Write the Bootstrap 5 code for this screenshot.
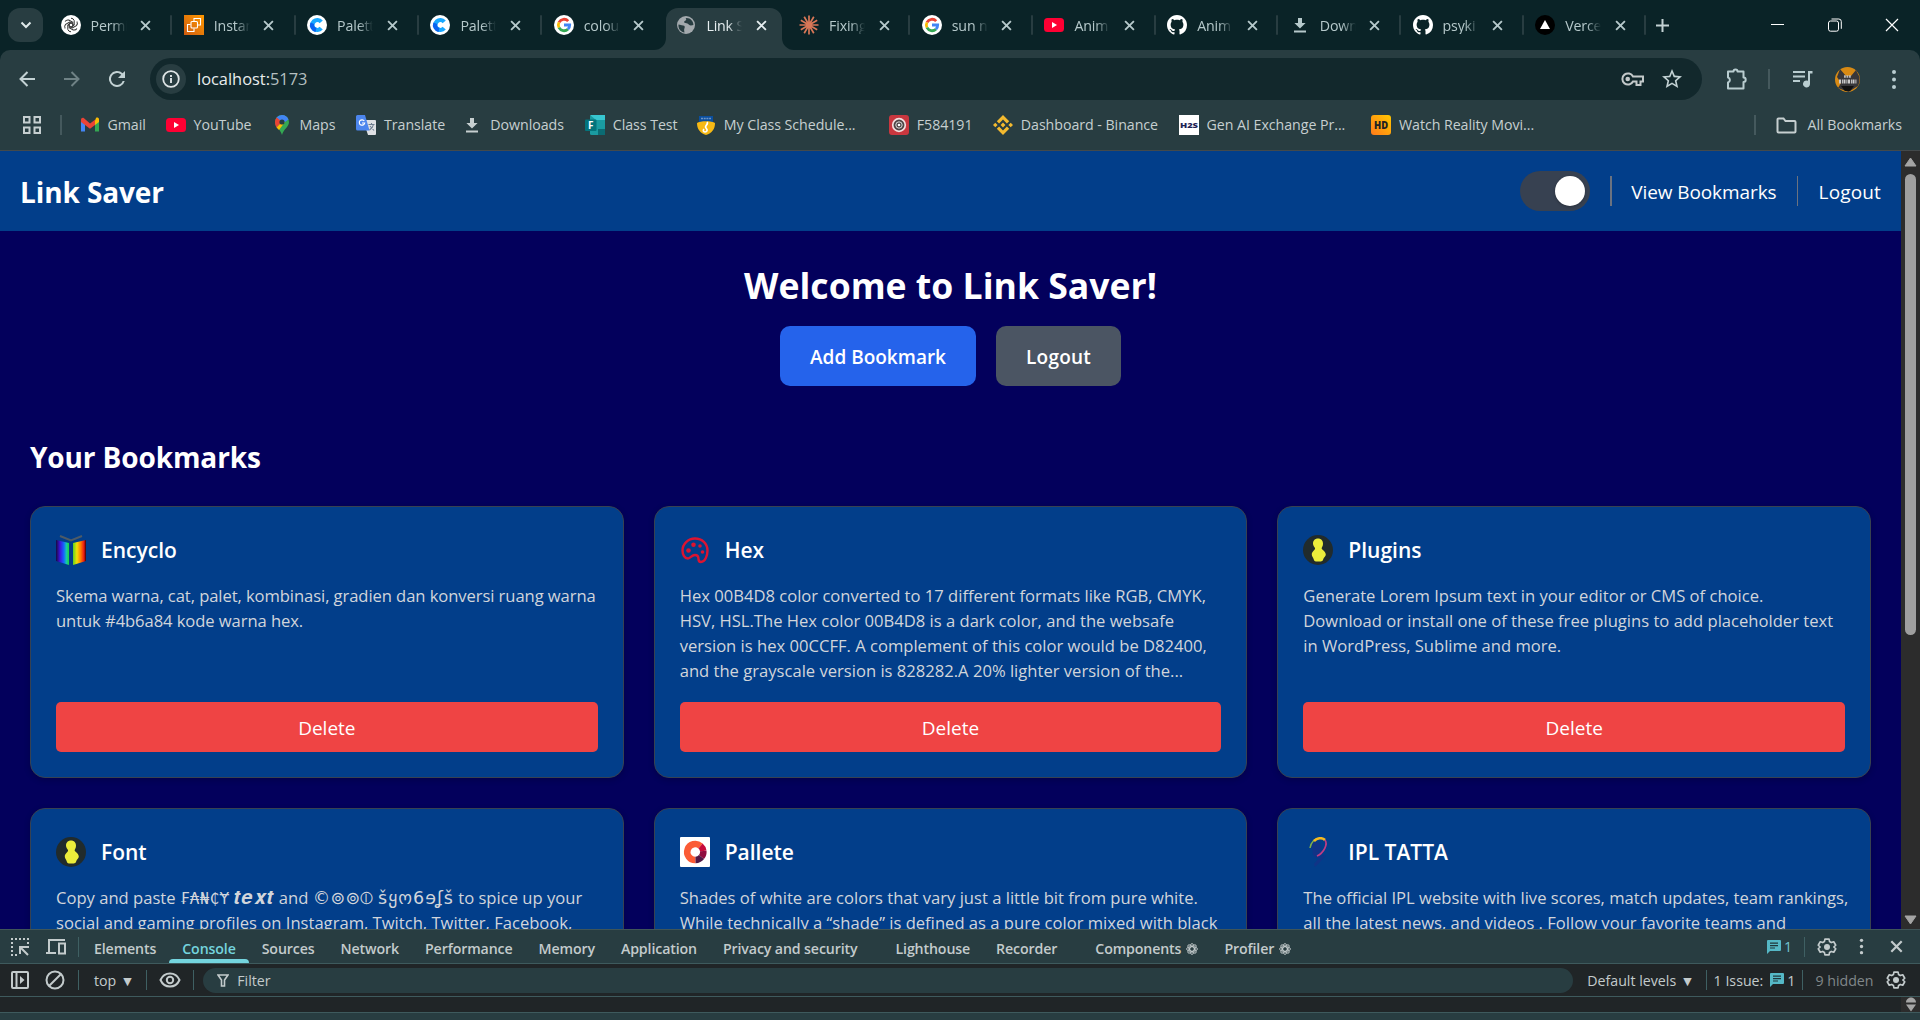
<!DOCTYPE html>
<html lang="en">
<head>
<meta charset="utf-8">
<title>Link Saver</title>
<link href="https://cdn.jsdelivr.net/npm/bootstrap@5.3.0/dist/css/bootstrap.min.css" rel="stylesheet">
<style>
:root{--tabstrip:#0a2327;--toolbar:#283d41;--omni:#12282c;--nav:#023e8a;--page:#03005c}
html,body{height:100%}
body{width:1920px;height:1020px;overflow:hidden;background:var(--page);font-family:"Open Sans","Noto Sans","DejaVu Sans",sans-serif;color:#fff;line-height:1.25}
svg{display:block;flex:none}
.nw{white-space:nowrap}
/* browser tabs */
.strip{height:50px;background:var(--tabstrip);padding-left:8px}
.tab-search{width:35px;height:34px;border-radius:12px;background:var(--toolbar);margin-right:6px}
.btab{width:122.7px;flex:none;height:50px;padding-left:11.5px;position:relative;font-size:14.2px;color:#b6c9cb}
.btab.wide{width:123.3px}
.btab .lbl{width:36px;overflow:hidden;white-space:nowrap;margin-left:10px;-webkit-mask-image:linear-gradient(90deg,#000 60%,transparent 100%);letter-spacing:-.15px;padding-top:1px}
.btab .x{margin-left:13.5px}
.btab::after{content:"";position:absolute;right:0;top:15px;width:2px;height:20px;background:#283d41;border-radius:1px}
.btab.nosep::after,.btab.on::after{display:none}
.btab.on{color:#e6eef0;z-index:1}
.btab.on .shape{position:absolute;left:-11px;top:8px;z-index:-1}
.btab-new{margin-left:10px}
.winbtn{width:57px}
/* toolbar */
.tools-wrap{background:var(--tabstrip)}
.tools{height:50px;background:var(--toolbar);padding-top:8px;border-radius:10px 10px 0 0}
.tools-grp{height:42px}
.ic-back{margin-left:19px}.ic-fwd{margin-left:29px}.ic-reload{margin:0 21px 0 25px}
.omni{width:1552px;height:42px;border-radius:21px;background:var(--omni);padding:0 20px 0 6px;font-size:16.4px}
.omni .info{width:30px;height:30px;border-radius:50%;background:var(--toolbar)}
.url{margin-left:11px;color:#e8eced;padding-top:1px}
.url span{color:#b5c0c1}
.ic-star{margin:0 -2px 0 16px}
.ic-ext{margin-left:23px}
.sp-ext{margin:0 23px 0 19px}
.avatar{margin:0 31px 0 22px}
.vr1{width:2px;height:20px;background:#45595d}
.marks{height:51px;background:var(--toolbar);border-bottom:1px solid #43494b;font-size:14.2px;color:#c6cfd0;padding-left:23px}
.sp-marks{margin:0 18px 0 18.500px}
.bm{display:flex;align-items:center;margin-right:21px;letter-spacing:-.04px}
.bm svg{width:20px;height:20px;margin-right:8px}
.bm span{white-space:nowrap;display:block}
.w1{width:37px}.w2{width:57px}.w3{width:35.5px}.w4{width:57.3px}.w5{width:73.5px}.w6{width:62px}.w7{width:144px}.w8{width:55px}.w9{width:136.8px}.w10{width:143.4px}
.all-bm{margin-right:18px}
.ic-folder{margin:0 10px 0 20px}
/* page */
.viewport{height:778px;overflow:hidden}
.app{width:1901px}
.topnav{height:80px;background:var(--nav);padding:0 20px}
.brand{font-size:28px;font-weight:700;letter-spacing:-.1px;padding-top:3px}
.topnav .lnk{font-size:19px;padding-top:3px;letter-spacing:-.08px}
.topnav .lnk:last-child{letter-spacing:.15px}
.toggle{width:70px;height:40px;border-radius:20px;background:#374151;padding:5px}
.toggle i{width:30px;height:30px;border-radius:50%;background:#fff;box-shadow:0 1px 3px #0004}
.vr2{height:30px;width:2px;background:#6b7280;margin:0 19px 0 20px}
.vr2.thin{width:1px;margin-right:21px}
.hero-title{font-size:35.6px;font-weight:700;line-height:50px;margin:29px 0 16px}
.act{height:60px;border-radius:10px;border:0;color:#fff;font-weight:600;font-size:19px;padding:4px 0 0}
.act.add{width:196px;background:#2563eb}
.act.out{width:125px;background:#4b5563;letter-spacing:.2px}
.acts{gap:20px}
.sect{font-size:28px;font-weight:700;letter-spacing:-.12px;line-height:40px;margin:51px 0 29px 30px}
.bgrid{display:grid;grid-template-columns:repeat(3,minmax(0,1fr));gap:30px;padding:0 30px}
.bcard{height:272px;background:var(--nav);border:1px solid #374151;border-radius:15px;padding:25px;box-shadow:0 2px 6px #0003}
.bcard h3{font-size:21px;font-weight:600;line-height:33px;padding-top:2px;margin:0 0 0 15px}
.bcard p{height:100px;font-size:16.6px;line-height:25px;color:#d1d5db;margin:16px 0 19px;white-space:nowrap}
.bcard:first-child p{letter-spacing:-.08px}
.bcard .del{width:100%;height:50px;border:0;border-radius:5px;background:#ef4444;color:#fff;font-size:19px;padding:3px 0 0}
.fancy{font-family:"DejaVu Sans",sans-serif;line-height:1}
.f1{font-size:15px;letter-spacing:.4px}.f2{font-size:20px;letter-spacing:.5px}.f3{font-size:17.5px;letter-spacing:.3px}.f4{font-size:17.5px;letter-spacing:1px}
.scroll{width:19px;background:#2c2c2c;padding:6px 0 4px}
.thumb{width:11px;height:461px;border-radius:6px;background:#9f9f9f;margin-top:7px}
/* devtools */
.dt{height:91px;background:#202527;color:#c3cbcc}
.dt-tabs{height:35px;background:var(--toolbar);border-top:1px solid #3f5558;border-bottom:1px solid #3e5a5d;font-size:14.2px;font-weight:600;padding-left:11px}
.dt-tabs .t{margin-right:26px;height:33px;padding-top:4px;letter-spacing:-.13px;white-space:nowrap;display:flex;align-items:center}
.dt-tabs .t.far{margin-right:38px}
.dt-tabs .t.on{color:#74d4de;position:relative}
.dt-tabs .t.on::after{content:"";position:absolute;left:-13px;right:-13px;bottom:0;height:4px;border-radius:4px 4px 0 0;background:#74d4de}
.dt-tabs .t svg{margin-left:5px}
.ic-dev{margin:0 11px 0 16px}
.cnt{margin:0 12px 0 3px;color:#74c4cf}
.vr3{width:1px;height:20px;background:#3f6063;flex:none}
.vr3.g15{margin-right:15px}.vr3.g7{margin-right:7px}.vr3.g12{margin:0 12px 0 7px}
.ic-gear1{margin:0 22px 0 12px}.ic-x1{margin:0 17px 0 26px}
.dt-bar{height:33px;border-bottom:1px solid #3e5a5d;font-size:14.2px;padding-left:11px}
.dt-bar>span:not(.vr3),.flt span{padding-top:1px}
.ic-clear{margin:0 13px 0 16px}.ic-eye{margin:0 12px 0 12.500px}
.flt{width:1370px;height:25px;border-radius:13px;background:var(--toolbar);padding-left:14px;margin-left:9px}
.flt svg{margin-right:8px}
.lv{margin-left:14px}
.ic-msg{margin:0 3px 0 7px}
.hid{color:#80888a}
.ic-gear2{margin:0 14px 0 auto}
.dt-con{height:16px;border-bottom:1px solid #3e5a5d}
.dt-con .mini{width:19px;background:#2c2c2c}
.dt-foot{height:7px;background:var(--toolbar)}
.tri{font-size:11px;margin:0 14px 0 7px}
</style>
</head>
<body>
<svg width="0" height="0" class="position-absolute">
<defs>
<symbol id="x" viewBox="0 0 10 10"><path d="M1 1l8 8M9 1L1 9" stroke="currentColor" stroke-width="1.7"/></symbol>
<symbol id="gg" viewBox="0 0 20 20"><circle cx="10" cy="10" r="10" fill="#fff"/><g fill="none" stroke-width="2.8"><path d="M14.2 6.1A5.7 5.7 0 0 0 5 7.3" stroke="#ea4335"/><path d="M5 7.3a5.7 5.7 0 0 0 0 5.4" stroke="#fbbc04"/><path d="M5 12.7a5.7 5.7 0 0 0 8.9 1.5" stroke="#34a853"/><path d="M13.9 14.2A5.7 5.7 0 0 0 15.7 10H10" stroke="#4285f4"/></g></symbol>
<symbol id="yt" viewBox="0 0 20 20"><rect y="3" width="20" height="14" rx="3.5" fill="#ff0033"/><path d="M8 7l5 3-5 3z" fill="#fff"/></symbol>
<symbol id="cc" viewBox="0 0 20 20"><circle cx="10" cy="10" r="10" fill="#fff"/><path d="M14.2 6.800A5 5 0 1 0 14.2 13.200" fill="none" stroke="#18a8ff" stroke-width="4.200"/><path d="M5.300 8.200A5 5 0 0 0 9 14.900" fill="none" stroke="#0a62f0" stroke-width="4.200"/></symbol>
<symbol id="gh" viewBox="0 0 16 16"><path fill="#fff" d="M8 0C3.58 0 0 3.58 0 8c0 3.54 2.29 6.53 5.47 7.59.4.07.55-.17.55-.38 0-.19-.01-.82-.01-1.49-2.01.37-2.53-.49-2.69-.94-.09-.23-.48-.94-.82-1.13-.28-.15-.68-.52-.01-.53.63-.01 1.08.58 1.23.82.72 1.21 1.87.87 2.33.66.07-.52.28-.87.51-1.07-1.78-.2-3.64-.89-3.64-3.95 0-.87.31-1.59.82-2.15-.08-.2-.36-1.02.08-2.12 0 0 .67-.21 2.2.82.64-.18 1.32-.27 2-.27s1.36.09 2 .27c1.53-1.04 2.2-.82 2.2-.82.44 1.1.16 1.92.08 2.12.51.56.82 1.27.82 2.15 0 3.07-1.87 3.75-3.65 3.95.29.25.54.73.54 1.48 0 1.07-.01 1.93-.01 2.2 0 .21.15.46.55.38A8.01 8.01 0 0 0 16 8c0-4.42-3.58-8-8-8z"/></symbol>
<symbol id="dl" viewBox="0 0 20 20"><path d="M8 3h4v5h3.600L10 13.400 4.400 8H8zM4 15.500h12v2H4z" fill="currentColor"/></symbol>
<symbol id="man" viewBox="0 0 30 30"><circle cx="15" cy="15" r="15" fill="#212b2c"/><path d="M15 3.500c3.200 0 5 2.200 5 5 0 2.600-.9 3.400-1.400 4.700.1 1.600 4.200 3.200 4.200 6.200 0 2-1.800 2.500-2.500 4.600-.6 1.900-.9 2.600-5 2.600s-4.200-.9-4.700-2.600c-.6-2.100-1.800-2.900-1.800-4.600 0-3.200 3.200-4 3.300-6.200C11.500 12 10 10.700 10 8.500c0-2.800 1.800-5 5-5z" fill="#eced3b"/></symbol>
<symbol id="gear" viewBox="0 0 24 24"><path fill="none" stroke="currentColor" stroke-width="2" stroke-linejoin="round" d="M9.500 2.500h5l.6 3 2 1.200 3-1 2.400 4.200-2.300 2.100 2.300 2.100-2.400 4.200-3-1-2 1.200-.6 3h-5l-.6-3-2-1.200-3 1-2.400-4.200L3.800 12 1.500 9.900l2.400-4.200 3 1 2-1.200z"/><circle cx="12" cy="12" r="3.600" fill="currentColor"/></symbol>
<symbol id="dots" viewBox="0 0 6 20"><g fill="currentColor"><circle cx="3" cy="2.600" r="2"/><circle cx="3" cy="10" r="2"/><circle cx="3" cy="17.400" r="2"/></g></symbol>
<symbol id="msg" viewBox="0 0 14 14"><path d="M1 0h12a1 1 0 0 1 1 1v9a1 1 0 0 1-1 1H3l-3 3V1a1 1 0 0 1 1-1z" fill="#55b8c6"/><path d="M3 3.200h8M3 5.600h8M3 8h5" stroke="#20363a" stroke-width="1.200"/></symbol>
<symbol id="atom" viewBox="0 0 12 12"><g fill="none" stroke="currentColor" stroke-width=".9"><ellipse cx="6" cy="6" rx="5.500" ry="2.200"/><ellipse cx="6" cy="6" rx="5.500" ry="2.200" transform="rotate(45 6 6)"/><ellipse cx="6" cy="6" rx="5.500" ry="2.200" transform="rotate(90 6 6)"/><ellipse cx="6" cy="6" rx="5.500" ry="2.200" transform="rotate(135 6 6)"/></g></symbol>
</defs></svg>

<div class="strip d-flex align-items-center">
 <div class="tab-search d-flex align-items-center justify-content-center"><svg width="12" height="8" viewBox="0 0 12 8"><path d="M1.500 1.500L6 6l4.500-4.500" fill="none" stroke="#dfe9ea" stroke-width="2"/></svg></div>
 <div class="btab wide d-flex align-items-center"><svg width="20" height="20" viewBox="0 0 20 20"><circle cx="10" cy="10" r="10" fill="#fff"/><g fill="none" stroke="#333" stroke-width="1"><g id="pt"><path d="M10 3.200a3.400 3.400 0 0 1 3.200 2.400v4.600L9 12.500"/></g><use href="#pt" transform="rotate(60 10 10)"/><use href="#pt" transform="rotate(120 10 10)"/><use href="#pt" transform="rotate(180 10 10)"/><use href="#pt" transform="rotate(240 10 10)"/><use href="#pt" transform="rotate(300 10 10)"/></g></svg><span class="lbl">Permi</span><svg class="x" width="11" height="11"><use href="#x"/></svg></div>
 <div class="btab wide d-flex align-items-center"><svg width="20" height="20" viewBox="0 0 20 20"><defs><linearGradient id="or" x1="0" y1="1" x2="1" y2="0"><stop stop-color="#cf5c10"/><stop offset="1" stop-color="#ff9900"/></linearGradient></defs><rect width="20" height="20" fill="url(#or)"/><g fill="none" stroke="#fff" stroke-width="1.100"><rect x="7" y="6.500" width="6.500" height="6.500" rx="1"/><path d="M10 6V3.500h6.500V10H14M6.500 9.500h-3v7H10v-3"/></g></svg><span class="lbl">Instan</span><svg class="x" width="11" height="11"><use href="#x"/></svg></div>
 <div class="btab wide d-flex align-items-center"><svg width="20" height="20"><use href="#cc"/></svg><span class="lbl">Palett</span><svg class="x" width="11" height="11"><use href="#x"/></svg></div>
 <div class="btab wide d-flex align-items-center"><svg width="20" height="20"><use href="#cc"/></svg><span class="lbl">Palett</span><svg class="x" width="11" height="11"><use href="#x"/></svg></div>
 <div class="btab nosep d-flex align-items-center"><svg width="20" height="20"><use href="#gg"/></svg><span class="lbl">colou</span><svg class="x" width="11" height="11"><use href="#x"/></svg></div>
 <div class="btab on d-flex align-items-center"><svg class="shape" width="140" height="42" viewBox="0 0 140 42"><path d="M0 42a12 12 0 0 0 12-12V12A12 12 0 0 1 24 0h92a12 12 0 0 1 12 12v18a12 12 0 0 0 12 12z" fill="#283d41"/></svg><svg width="20" height="20" viewBox="0 0 20 20"><circle cx="10" cy="10" r="9" fill="#a3a9ad"/><path d="M2.500 9.500c2 0 2.500 1 4.500 1s2 1.500 1.500 2.700S8 15 8.500 17.500C4.500 17 2 13.500 2.500 9.500zM9.500 3c1.500 1 .5 2.500-.7 3s-.8 2 .7 2 2.500.7 3.500 1.800 3 .7 4.400.2c.2-4-3.500-7.800-7.900-7z" fill="#283d41"/></svg><span class="lbl">Link S</span><svg class="x" width="11" height="11"><use href="#x"/></svg></div>
 <div class="btab d-flex align-items-center"><svg width="20" height="20" viewBox="0 0 20 20"><path d="M10 .5v19M.5 10h19M5.200 1.800l9.600 16.400M14.800 1.800L5.200 18.200M1.800 5.200l16.400 9.600M18.200 5.200L1.800 14.800" stroke="#d97757" stroke-width="1.700"/></svg><span class="lbl">Fixing</span><svg class="x" width="11" height="11"><use href="#x"/></svg></div>
 <div class="btab d-flex align-items-center"><svg width="20" height="20"><use href="#gg"/></svg><span class="lbl">sun n</span><svg class="x" width="11" height="11"><use href="#x"/></svg></div>
 <div class="btab d-flex align-items-center"><svg width="20" height="20"><use href="#yt"/></svg><span class="lbl">Anim</span><svg class="x" width="11" height="11"><use href="#x"/></svg></div>
 <div class="btab d-flex align-items-center"><svg width="20" height="20"><use href="#gh"/></svg><span class="lbl">Anim</span><svg class="x" width="11" height="11"><use href="#x"/></svg></div>
 <div class="btab d-flex align-items-center"><svg width="20" height="20"><use href="#dl"/></svg><span class="lbl">Down</span><svg class="x" width="11" height="11"><use href="#x"/></svg></div>
 <div class="btab d-flex align-items-center"><svg width="20" height="20"><use href="#gh"/></svg><span class="lbl">psyki</span><svg class="x" width="11" height="11"><use href="#x"/></svg></div>
 <div class="btab d-flex align-items-center"><svg width="20" height="20" viewBox="0 0 20 20"><circle cx="10" cy="10" r="10"/><path d="M10 5l5 9H5z" fill="#fff"/></svg><span class="lbl">Vercel</span><svg class="x" width="11" height="11"><use href="#x"/></svg></div>
 <svg class="btab-new" width="13" height="13" viewBox="0 0 13 13"><path d="M6.500 0v13M0 6.500h13" stroke="#c3d2d4" stroke-width="2"/></svg>
 <div class="ms-auto d-flex align-items-center">
  <div class="winbtn d-flex justify-content-center"><svg width="13" height="13" viewBox="0 0 13 13"><path d="M0 5.500h13" stroke="#fff"/></svg></div>
  <div class="winbtn d-flex justify-content-center"><svg width="14" height="14" viewBox="0 0 14 14"><g fill="none" stroke="#fff"><rect x=".5" y="3" width="10" height="10.200" rx="2"/><path d="M3.500 1h7.300a2.500 2.500 0 0 1 2.500 2.500v7.300"/></g></svg></div>
  <div class="winbtn d-flex justify-content-center"><svg width="14" height="14" viewBox="0 0 14 14"><path d="M1 1l12 12M13 1L1 13" stroke="#fff" stroke-width="1.200"/></svg></div>
 </div>
</div>

<div class="tools-wrap"><div class="tools d-flex">
 <div class="tools-grp d-flex align-items-center">
  <svg class="ic-back" width="16" height="16" viewBox="0 0 16 16"><path d="M16 8H1.500M8.500 1L1.500 8l7 7" fill="none" stroke="#c3d2d4" stroke-width="2"/></svg>
  <svg class="ic-fwd" width="16" height="16" viewBox="0 0 16 16"><path d="M0 8h14.500M7.500 1l7 7-7 7" fill="none" stroke="#6f8285" stroke-width="2"/></svg>
  <svg class="ic-reload" width="24" height="24" viewBox="0 0 24 24"><path d="M17.650 6.350A8 8 0 1 0 19.730 14h-2.080A6 6 0 1 1 12 6c1.660 0 3.140.69 4.220 1.780L13 11h7V4z" fill="#c3d2d4"/></svg>
 </div>
 <div class="omni d-flex align-items-center">
  <div class="info d-flex align-items-center justify-content-center"><svg width="18" height="18" viewBox="0 0 18 18"><circle cx="9" cy="9" r="7.800" fill="none" stroke="#dfe5e6" stroke-width="1.800"/><path d="M9 8v5M9 5v1.900" stroke="#dfe5e6" stroke-width="1.900"/></svg></div>
  <div class="url nw">localhost:<span>5173</span></div>
  <svg class="ms-auto" width="23" height="16" viewBox="0 0 23 16"><g fill="none" stroke="#c3c9ca" stroke-width="2"><path d="M12 5.500A5.600 5.600 0 1 0 12 10.500h3.500V14h4v-3.500H22v-5z"/></g><circle cx="6.700" cy="8" r="2.300" fill="#c3c9ca"/></svg>
  <svg class="ic-star" width="24" height="24" viewBox="0 0 24 24"><path d="M22 9.240l-7.190-.62L12 2 9.190 8.630 2 9.240l5.460 4.730L5.820 21 12 17.270 18.180 21l-1.630-7.030zM12 15.400l-3.760 2.270 1-4.280-3.320-2.880 4.380-.38L12 6.100l1.710 4.040 4.380.38-3.320 2.880 1 4.280z" fill="#c3d2d4"/></svg>
 </div>
 <div class="tools-grp d-flex align-items-center">
  <svg class="ic-ext" width="24" height="24" viewBox="0 0 24 24"><path d="M3 4.500h5.500a2 2 0 0 1 4 0h6v6a2.200 2.200 0 0 1 0 4.400v6.600h-15.500v-6a2.600 2.600 0 0 0 0-5z" fill="none" stroke="#b9cdd0" stroke-width="2" stroke-linejoin="round"/></svg>
  <span class="vr1 sp-ext"></span>
  <svg width="20" height="18" viewBox="0 0 20 18"><path d="M0 2h12M0 6.500h12M0 11h7" stroke="#b9cdd0" stroke-width="2"/><path d="M15 1h4.500v2.500H17V14a3.500 3.500 0 1 1-2-3.200z" fill="#b9cdd0"/></svg>
  <svg class="avatar" width="25" height="25" viewBox="0 0 25 25"><circle cx="12.500" cy="12.500" r="12.500" fill="#d88a14"/><path d="M5 2l6 7h5l5-6 3.500 7v5l-1.500 4-9.500 6L3 21l3-5-4-6z" fill="#38373a"/><path d="M4 14.500h18" stroke="#ccc" stroke-width="4" stroke-dasharray="2 .9 1 .6"/><path d="M9 9.500h7" stroke="#bbb" stroke-width="2.400" stroke-dasharray="1.800 .7"/><path d="M6 19h13l-4 5h-5z" fill="#111"/></svg>
  <svg width="6" height="21" color="#b9cdd0"><use href="#dots"/></svg>
 </div>
</div></div>

<div class="marks d-flex align-items-center">
 <svg width="18" height="18" viewBox="0 0 18 18"><g fill="none" stroke="#c6cfd0" stroke-width="2"><rect x="1" y="1" width="5.500" height="5.500"/><rect x="11.500" y="1" width="5.500" height="5.500"/><rect x="1" y="11.500" width="5.500" height="5.500"/><rect x="11.500" y="11.500" width="5.500" height="5.500"/></g></svg>
 <span class="vr1 sp-marks"></span>
 <div class="bm"><svg viewBox="0 0 20 20"><path d="M1 4.500v12h4V9z" fill="#4285f4"/><path d="M15 9v7.500h4v-12z" fill="#34a853"/><path d="M15 5.500V10l4-3V4.500c0-1.800-2-2.400-3-1.600z" fill="#fbbc04"/><path d="M1 5v2l4 3 5 3.700 5-3.700V4.800L10 8.500 4 3.200C2.500 2.200 1 3.300 1 5z" fill="#ea4335"/></svg><span class="w1">Gmail</span></div>
 <div class="bm"><svg><use href="#yt"/></svg><span class="w2">YouTube</span></div>
 <div class="bm"><svg viewBox="0 0 20 20"><path d="M10 0a7 7 0 0 1 7 7c0 5-5.500 7-7 13-1.500-6-7-8-7-13a7 7 0 0 1 7-7z" fill="#34a853"/><path d="M10 0a7 7 0 0 1 6.500 4.500L10 9 4.500 2.600A7 7 0 0 1 10 0z" fill="#4285f4"/><path d="M4.800 2.400L10 7l-5.500 5.500C3.500 11 3 9 3 7c0-2 .7-3.500 1.800-4.600z" fill="#ea4335"/><path d="M4.500 12.500L10 7l3 0-6 8z" fill="#fbbc04"/><circle cx="10" cy="7" r="2.600" fill="#263c41"/></svg><span class="w3">Maps</span></div>
 <div class="bm"><svg viewBox="0 0 20 20"><path d="M7 5h12a1 1 0 0 1 1 1v13a1 1 0 0 1-1 1h-7z" fill="#dfe1e4"/><path d="M1.500 0H9l4.500 15.500h-12A1.500 1.500 0 0 1 0 14V1.500A1.500 1.500 0 0 1 1.500 0z" fill="#4c86ee"/><path d="M8.300 6A2.700 2.700 0 1 0 8.700 8H6" fill="none" stroke="#fff" stroke-width="1.200"/><path d="M12.500 9.500h6M15.500 8v1.500M17.500 9.500c-.5 2.500-2 4-4 5.500M14 11l4 4.500" stroke="#6e7f90" stroke-width="1.100" fill="none"/></svg><span class="w4">Translate</span></div>
 <div class="bm"><svg><use href="#dl"/></svg><span class="w5">Downloads</span></div>
 <div class="bm"><svg viewBox="0 0 20 20"><rect x="5" width="15" height="20" rx="1.500" fill="#1a9ba1"/><path d="M5 0h15v5h-9z" fill="#37c6d0"/><path d="M13 14h7v6h-7z" fill="#0b6b73"/><rect y="4.500" width="11.500" height="11.500" rx="1" fill="#03747c"/><text x="3" y="13.800" font-size="10" font-weight="700" fill="#fff">F</text></svg><span class="w6">Class Test</span></div>
 <div class="bm"><svg viewBox="0 0 20 20"><path d="M3 1h14v6H3z" fill="#0b4f9e"/><path d="M1 8c3-2.500 15-2.500 18 0 0 6-3 10-9 12-6-2-9-6-9-12z" fill="#f6b915"/><path d="M11 7c2 2-3 4-1 6s1 4-1 4-2-2-1-3" fill="none" stroke="#fff" stroke-width="1.700"/><path d="M5 3.500h10" stroke="#6f95c4" stroke-width="1.600" stroke-dasharray="2 .7"/></svg><span class="w7">My Class Schedule...</span></div>
 <div class="bm"><svg viewBox="0 0 20 20"><rect width="20" height="20" rx="3" fill="#c9373f"/><circle cx="10" cy="10" r="6.300" fill="#4d4545" stroke="#f3dede" stroke-width="1.700"/><circle cx="10" cy="10" r="3.200" fill="none" stroke="#ddd"/><circle cx="10" cy="10" r="1.300" fill="#fff"/></svg><span class="w8">F584191</span></div>
 <div class="bm"><svg viewBox="0 0 20 20"><path d="M10 7.600l2.400 2.400-2.400 2.400L7.600 10zM2.300 7.700L4.600 10l-2.300 2.300L0 10zM17.700 7.700L20 10l-2.300 2.300-2.300-2.300zM10 0l6.200 6.200-2.300 2.300L10 4.600 6.100 8.500 3.800 6.200zM10 20l6.200-6.200-2.300-2.300-3.900 3.900-3.900-3.900-2.300 2.300z" fill="#f3ba2f"/></svg><span class="w9">Dashboard - Binance</span></div>
 <div class="bm"><svg viewBox="0 0 20 20"><rect width="20" height="20" fill="#fff"/><text x="1" y="12.800" font-size="7.500" font-weight="800" textLength="18" lengthAdjust="spacingAndGlyphs" fill="#1d2355">H2S</text></svg><span class="w10">Gen AI Exchange Pr...</span></div>
 <div class="bm"><svg viewBox="0 0 20 20"><defs><linearGradient id="hd" x1="0" y1="1" x2="1" y2="0"><stop stop-color="#ff7a1a"/><stop offset="1" stop-color="#ffc800"/></linearGradient></defs><rect width="20" height="20" rx="3" fill="url(#hd)"/><text x="3" y="14" font-size="11" font-weight="800" textLength="14" lengthAdjust="spacingAndGlyphs" fill="#222">HD</text></svg><span>Watch Reality Movi...</span></div>
 <div class="all-bm ms-auto d-flex align-items-center"><span class="vr1"></span><svg class="ic-folder" width="21" height="17" viewBox="0 0 21 17"><path d="M1.500 2.500a1 1 0 0 1 1-1h5l2 2.500h9a1 1 0 0 1 1 1v9.500a1 1 0 0 1-1 1h-16a1 1 0 0 1-1-1z" fill="none" stroke="#c6cfd0" stroke-width="2"/></svg><span class="nw">All Bookmarks</span></div>
</div>

<div class="viewport d-flex">
 <div class="app">
  <div class="topnav d-flex align-items-center">
   <span class="brand nw">Link Saver</span>
   <div class="toggle ms-auto d-flex justify-content-end"><i></i></div>
   <span class="vr2"></span>
   <span class="lnk nw">View Bookmarks</span>
   <span class="vr2 thin"></span>
   <span class="lnk nw">Logout</span>
  </div>
  <h1 class="hero-title text-center">Welcome to Link Saver!</h1>
  <div class="acts d-flex justify-content-center"><button class="act add">Add Bookmark</button><button class="act out">Logout</button></div>
  <h2 class="sect">Your Bookmarks</h2>
  <div class="bgrid">
   <div class="bcard"><div class="d-flex align-items-center"><svg width="30" height="30" viewBox="0 0 30 30"><defs><linearGradient id="la"><stop stop-color="#170a40"/><stop offset=".3" stop-color="#3c12d6"/><stop offset=".6" stop-color="#1663ff"/><stop offset=".8" stop-color="#13c8b0"/><stop offset="1" stop-color="#1fd63a"/></linearGradient><linearGradient id="lb"><stop stop-color="#5ed321"/><stop offset=".3" stop-color="#f2e205"/><stop offset=".6" stop-color="#ff7a00"/><stop offset=".85" stop-color="#e81313"/><stop offset="1" stop-color="#2b0505"/></linearGradient></defs><path d="M0 5l13 3v22L0 26z" fill="url(#la)"/><path d="M30 5L17 8v22l13-4z" fill="url(#lb)"/><path d="M4 1l11 4.500L26 1" fill="none" stroke="#4d5a66" stroke-width="2"/></svg><h3>Encyclo</h3></div>
    <p>Skema warna, cat, palet, kombinasi, gradien dan konversi ruang warna<br>untuk #4b6a84 kode warna hex.</p><button class="del">Delete</button></div>
   <div class="bcard"><div class="d-flex align-items-center"><svg width="30" height="30" viewBox="0 0 30 30"><path d="M15 3.500C8 3.500 2.500 9 2.500 15.500c0 4 2 8 5.500 8 2.500 0 3.500-3.500 7-3.500 3 0 3.500 2 3.500 4 0 1.800.5 3 2.500 3 4 0 6.500-6 6.500-11.500C27.500 8.500 22 3.500 15 3.500z" fill="none" stroke="#dc1431" stroke-width="2.400"/><g fill="#dc1431"><circle cx="8.500" cy="15.500" r="2.300"/><circle cx="13.500" cy="9.800" r="2.300"/><circle cx="20" cy="11" r="1.800"/><circle cx="22.500" cy="17" r="1.800"/></g></svg><h3>Hex</h3></div>
    <p>Hex 00B4D8 color converted to 17 different formats like RGB, CMYK,<br>HSV, HSL.The Hex color 00B4D8 is a dark color, and the websafe<br>version is hex 00CCFF. A complement of this color would be D82400,<br>and the grayscale version is 828282.A 20% lighter version of the...</p><button class="del">Delete</button></div>
   <div class="bcard"><div class="d-flex align-items-center"><svg width="30" height="30"><use href="#man"/></svg><h3>Plugins</h3></div>
    <p>Generate Lorem Ipsum text in your editor or CMS of choice.<br>Download or install one of these free plugins to add placeholder text<br>in WordPress, Sublime and more.</p><button class="del">Delete</button></div>
   <div class="bcard"><div class="d-flex align-items-center"><svg width="30" height="30"><use href="#man"/></svg><h3>Font</h3></div>
    <p>Copy and paste <span class="fancy f1">₣₳₦₵Ɏ</span> <span class="fancy f2">𝒕𝒆𝒙𝒕</span> and <span class="fancy f3">©⊚⊚⦶</span> <span class="fancy f4">šყო6ɘʆš</span> to spice up your<br>social and gaming profiles on Instagram, Twitch, Twitter, Facebook,</p></div>
   <div class="bcard"><div class="d-flex align-items-center"><svg width="30" height="30" viewBox="0 0 30 30"><rect width="30" height="30" rx="1" fill="#fff"/><g fill="none" stroke-width="6.500"><path d="M15.500 23A8 8 0 1 1 20.500 9" stroke="#fb5b35"/><path d="M20.500 9A8 8 0 0 1 23.300 14" stroke="#c70a3a"/><path d="M23.300 14A8 8 0 0 1 21.500 20" stroke="#900c3f"/><path d="M21.500 20A8 8 0 0 1 15.500 23" stroke="#511845"/></g></svg><h3>Pallete</h3></div>
    <p>Shades of white are colors that vary just a little bit from pure white.<br>While technically a “shade” is defined as a pure color mixed with black</p></div>
   <div class="bcard"><div class="d-flex align-items-center"><svg width="30" height="30" viewBox="0 0 30 30"><path d="M8 9c3 4 0 8 4 11s8 0 7-4 0-8-3-10-7-2-8 3zM17 20l6-2-5 6-6 6-1-3z" fill="#1b2f86" opacity=".6"/><path d="M7 11C8 5 12 1 17 1" fill="none" stroke="#7fae4a" stroke-width="1.500"/><path d="M11 4c3-3 8-4 11-1" fill="none" stroke="#f5b921" stroke-width="2.500"/><path d="M22 3c3 4-1 13-8 16" fill="none" stroke="#c03d83" stroke-width="1.700"/></svg><h3>IPL TATTA</h3></div>
    <p>The official IPL website with live scores, match updates, team rankings,<br>all the latest news, and videos . Follow your favorite teams and</p></div>
  </div>
 </div>
 <div class="scroll d-flex flex-column align-items-center"><svg width="13" height="10" viewBox="0 0 13 10"><path d="M6.500 1L12 9H1z" fill="#a5a5a5" stroke="#a5a5a5" stroke-linejoin="round"/></svg><div class="thumb"></div><svg class="mt-auto" width="13" height="10" viewBox="0 0 13 10"><path d="M6.500 9L12 1H1z" fill="#a5a5a5" stroke="#a5a5a5" stroke-linejoin="round"/></svg></div>
</div>

<div class="dt">
 <div class="dt-tabs d-flex align-items-center">
  <svg width="18" height="18" viewBox="0 0 18 18"><path d="M0 1h18M1 4v14M17 4v3M4 17h3" fill="none" stroke="currentColor" stroke-width="2" stroke-dasharray="2 2"/><path d="M17 17L9.500 9.500M9 16V9h9" fill="none" stroke="currentColor" stroke-width="2"/></svg>
  <svg class="ic-dev" width="22" height="18" viewBox="0 0 22 18"><path d="M20 2H4v12M1 15h10" fill="none" stroke="currentColor" stroke-width="2"/><rect x="14" y="5.500" width="6" height="10" fill="none" stroke="currentColor" stroke-width="2"/></svg>
  <span class="vr3 g15"></span>
  <span class="t">Elements</span><span class="t on">Console</span><span class="t">Sources</span><span class="t">Network</span><span class="t">Performance</span><span class="t">Memory</span><span class="t">Application</span><span class="t far">Privacy and security</span><span class="t">Lighthouse</span><span class="t far">Recorder</span><span class="t">Components<svg width="12" height="12"><use href="#atom"/></svg></span><span class="t">Profiler<svg width="12" height="12"><use href="#atom"/></svg></span>
  <div class="ms-auto d-flex align-items-center fw-normal"><svg width="14" height="14"><use href="#msg"/></svg><span class="cnt">1</span><span class="vr3"></span><svg class="ic-gear1" width="20" height="20"><use href="#gear"/></svg><svg width="5" height="17"><use href="#dots"/></svg><svg class="ic-x1" width="13" height="13"><use href="#x"/></svg></div>
 </div>
 <div class="dt-bar d-flex align-items-center">
  <svg width="18" height="18" viewBox="0 0 18 18"><rect x="1" y="1" width="16" height="16" rx="1" fill="none" stroke="currentColor" stroke-width="2"/><path d="M5.500 1v16" stroke="currentColor" stroke-width="2"/><path d="M9 5l4.500 4L9 13z" fill="currentColor"/></svg>
  <svg class="ic-clear" width="20" height="20" viewBox="0 0 20 20"><circle cx="10" cy="10" r="8.500" fill="none" stroke="currentColor" stroke-width="2"/><path d="M4 16L16 4" stroke="currentColor" stroke-width="2"/></svg>
  <span class="vr3 g15"></span><span>top</span><span class="tri">▼</span><span class="vr3"></span>
  <svg class="ic-eye" width="22" height="18" viewBox="0 0 22 18"><path d="M1.500 9C3.500 4.500 7 2.500 11 2.500s7.500 2 9.500 6.500c-2 4.500-5.500 6.500-9.500 6.500S3.500 13.500 1.500 9z" fill="none" stroke="currentColor" stroke-width="2"/><circle cx="11" cy="9" r="3.200" fill="none" stroke="currentColor" stroke-width="2"/></svg><span class="vr3"></span>
  <div class="flt d-flex align-items-center"><svg width="12" height="13" viewBox="0 0 12 13"><path d="M1 1h10L7.500 6v6h-3V6z" fill="none" stroke="currentColor" stroke-width="1.600"/></svg><span>Filter</span></div>
  <span class="nw lv">Default levels</span><span class="tri">▼</span><span class="vr3 g7"></span><span class="nw">1 Issue:</span><svg class="ic-msg" width="14" height="14"><use href="#msg"/></svg><span>1</span><span class="vr3 g12"></span><span class="nw hid">9 hidden</span><svg class="ic-gear2" width="20" height="20"><use href="#gear"/></svg>
 </div>
 <div class="dt-con d-flex justify-content-end"><div class="mini d-flex flex-column align-items-center"><svg width="12" height="15" viewBox="0 0 12 15"><path d="M1 5.500C1 2 4 .5 6 .5s5 1.500 5 5zM1 7.500h10l-5 7z" fill="#a5a5a5"/></svg></div></div>
 <div class="dt-foot"></div>
</div>
<script src="https://cdn.jsdelivr.net/npm/bootstrap@5.3.0/dist/js/bootstrap.bundle.min.js"></script>
</body>
</html>
